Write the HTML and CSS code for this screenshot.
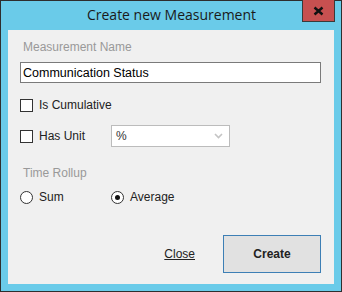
FILE: index.html
```html
<!DOCTYPE html>
<html lang="en">
<head>
    <meta charset="UTF-8">
    <title>Create new Measurement</title>
    <link rel="stylesheet" href="styles.css">
</head>
<body>

<div class="window">
    <div class="titlebar">
        <span></span>
        <div class="title">Create new Measurement</div>
        <div class="close-x">
            <svg width="11" height="10" viewBox="0 0 11 10">
                <path d="M1.5 1.5 L9.5 8.5 M9.5 1.5 L1.5 8.5" stroke="#111" stroke-width="2.4"/>
            </svg>
        </div>
    </div>

    <div class="content">
        <div class="group-label">Measurement Name</div>
        <input class="textbox" type="text" value="Communication Status">

        <div class="row first">
            <label class="opt"><span class="check"></span>Is Cumulative</label>
        </div>

        <div class="row unit">
            <label class="opt col"><span class="check"></span>Has Unit</label>
            <div class="select">
                <span>%</span>
                <svg width="9" height="6" viewBox="0 0 9 6">
                    <path d="M1 1 L4.5 4.5 L8 1" fill="none" stroke="#c4c4c4" stroke-width="1.6"/>
                </svg>
            </div>
        </div>

        <div class="group-label rollup">Time Rollup</div>
        <div class="row radios">
            <label class="opt col"><span class="radio"></span>Sum</label>
            <label class="opt"><span class="radio on"></span>Average</label>
        </div>

        <div class="actions">
            <a href="#" class="link">Close</a>
            <button class="btn">Create</button>
        </div>
    </div>
</div>

</body>
</html>
```

FILE: styles.css
```css
body {
    margin: 0;
    padding: 0;
    font-family: "Liberation Sans", Arial, sans-serif;
}

.window {
    width: 340px;
    height: 290px;
    border: 1px solid #2e2e2e;
    background-color: #6acbe9;
    display: flex;
    flex-direction: column;
}

.titlebar {
    height: 29px;
    display: grid;
    grid-template-columns: 1fr auto 1fr;
}

.title {
    font-family: "Open Sans", sans-serif;
    font-size: 14px;
    color: #1a1a1a;
    line-height: 28px;
    padding-left: 1px;
}

.close-x {
    justify-self: end;
    margin-right: 6px;
    margin-top: -1px;
    width: 31px;
    height: 21px;
    background-color: #c75050;
    border: 1px solid #3a3a3a;
    border-top: none;
    display: flex;
    align-items: center;
    justify-content: center;
}

.content {
    margin: 0 7px;
    height: 254px;
    background-color: #f0f0f0;
    padding: 10px 12px 0 12px;
    box-sizing: border-box;
    font-size: 12px;
    color: #222;
}

.group-label {
    color: #999;
    padding-left: 3px;
    line-height: 14px;
}

.textbox {
    display: block;
    margin-top: 8px;
    width: 301px;
    height: 21px;
    box-sizing: border-box;
    border: 1px solid #7a7a7a;
    background: #fff;
    padding: 0 2px;
    font-family: "Liberation Sans", Arial, sans-serif;
    font-size: 12.5px;
    color: #000;
    outline: none;
}

.row {
    display: flex;
    align-items: center;
}

.row.first {
    margin-top: 16px;
    height: 13px;
}

.row.unit {
    margin-top: 13px;
    height: 22px;
}

.opt {
    display: flex;
    align-items: center;
    gap: 6px;
    line-height: 13px;
}

.col {
    width: 91px;
}

.check {
    width: 11px;
    height: 11px;
    border: 1px solid #333;
    background: #fff;
}

.radio {
    width: 11px;
    height: 11px;
    border: 1px solid #333;
    border-radius: 50%;
    background: #fff;
    display: flex;
    align-items: center;
    justify-content: center;
}

.radio.on::after {
    content: "";
    width: 5px;
    height: 5px;
    border-radius: 50%;
    background: #111;
}

.select {
    width: 119px;
    height: 22px;
    box-sizing: border-box;
    border: 1px solid #bcbcbc;
    background: #fff;
    display: flex;
    align-items: center;
    justify-content: space-between;
    padding: 0 6px 0 4px;
    color: #333;
}

.rollup {
    margin-top: 19px;
}

.row.radios {
    margin-top: 11px;
    height: 13px;
}

.actions {
    margin-top: 31px;
    display: flex;
    justify-content: flex-end;
    align-items: center;
    gap: 28px;
    padding-right: 1px;
}

.link {
    color: #222;
    font-size: 12px;
}

.btn {
    width: 98px;
    height: 38px;
    border: 1px solid #3d7fb5;
    background-color: #e1e1e1;
    font-family: "Liberation Sans", Arial, sans-serif;
    font-size: 12px;
    font-weight: bold;
    color: #222;
}
```
